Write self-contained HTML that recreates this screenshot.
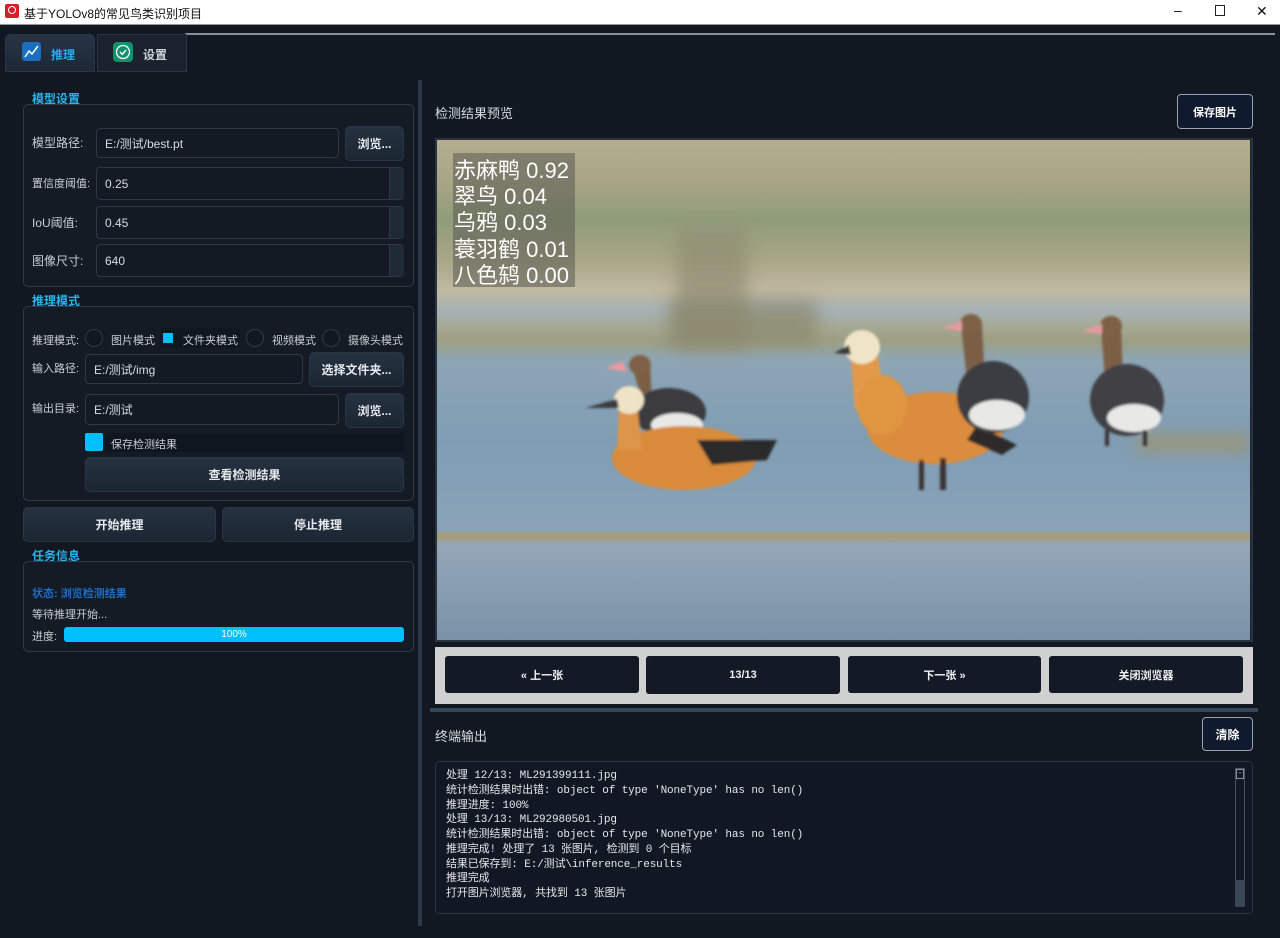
<!DOCTYPE html>
<html><head><meta charset="utf-8">
<style>
*{margin:0;padding:0;box-sizing:border-box}
body{width:1280px;height:938px;background:#121821;position:relative;overflow:hidden;font-family:"Liberation Sans","Noto Sans CJK SC",sans-serif;color:#d4d8de;font-size:12px}
.a{position:absolute}
.title{left:0;top:0;width:1280px;height:25px;background:#fff;color:#111;border-bottom:1px solid #999}
.sec{color:#27b4ee;font-weight:bold;font-size:12px}
.grp{border:1px solid #2f3947;border-radius:5px;background:#141b25}
.lbl{color:#c9cdd3;font-size:12px}
.inp{background:#131a24;border:1px solid #2f3846;border-radius:4px;color:#d8dce2;font-size:12px;padding-left:8px;display:flex;align-items:center}
.btn{background:linear-gradient(#263241,#1c2633);border:1px solid #2b3645;border-radius:5px;color:#e6e9ee;font-weight:bold;font-size:12px;display:flex;align-items:center;justify-content:center}
.spin{background:#202a37;border-left:1px solid #2f3846}
.nb{background:#131a26;border-radius:3px;color:#f0f0f0;font-weight:bold;font-size:11px;display:flex;align-items:center;justify-content:center}
.term{font-family:"Liberation Mono","Noto Sans CJK SC",monospace;font-size:11px;letter-spacing:-0.12px;line-height:14.75px;color:#e4e6ea;white-space:pre}
.rad{width:18px;height:18px;border:1px solid #2f3a48;border-radius:50%;background:#121821}
.r{font-size:11px}
</style></head><body>
<div class="a title">
 <div class="a" style="left:5px;top:4px;width:14px;height:14px;background:#d4202a;border-radius:2px"><div class="a" style="left:3px;top:2px;width:8px;height:8px;border:1.5px solid #fff;border-radius:50%"></div></div>
 <div class="a" style="left:24px;top:5px;font-size:12px">基于YOLOv8的常见鸟类识别项目</div>
 <div class="a" style="left:1174px;top:2px;font-size:14px">–</div>
 <div class="a" style="left:1215px;top:5px;width:10px;height:11px;border:1px solid #222"></div>
 <div class="a" style="left:1256px;top:3px;font-size:14px">✕</div>
</div>
<div class="a" style="left:185px;top:33px;width:1090px;height:2px;background:#8a9098"></div>
<div class="a" style="left:5px;top:34px;width:90px;height:38px;background:linear-gradient(#283446,#1d2735);border:1px solid #2b3544;border-radius:5px 5px 0 0"></div>
<div class="a" style="left:22px;top:42px;width:19px;height:19px;background:#1a6fc0;border-radius:3px"><svg width="19" height="19"><path d="M3 15 L7 9 L10 12 L16 4" stroke="#fff" stroke-width="1.5" fill="none"/></svg></div>
<div class="a" style="left:51px;top:46px;color:#1fb0ee;font-weight:bold">推理</div>
<div class="a" style="left:97px;top:34px;width:90px;height:38px;background:#1a222e;border:1px solid #2b3544"></div>
<div class="a" style="left:113px;top:42px;width:20px;height:20px;background:#14906c;border-radius:4px"><svg width="20" height="20"><circle cx="10" cy="10" r="6.5" stroke="#fff" stroke-width="1.3" fill="none"/><path d="M7 10 L9.3 12.3 L13 8" stroke="#fff" stroke-width="1.4" fill="none"/></svg></div>
<div class="a" style="left:143px;top:46px;color:#d0d4da;font-weight:bold">设置</div>
<div class="a" style="left:418px;top:80px;width:4px;height:846px;background:#2b3848"></div>

<div class="a sec" style="left:32px;top:90px">模型设置</div>
<div class="a grp" style="left:23px;top:104px;width:391px;height:183px"></div>
<div class="a lbl" style="left:32px;top:134px">模型路径:</div>
<div class="a inp" style="left:96px;top:128px;width:243px;height:30px">E:/测试/best.pt</div>
<div class="a btn" style="left:345px;top:126px;width:59px;height:35px">浏览...</div>
<div class="a lbl r" style="left:32px;top:175px">置信度阈值:</div>
<div class="a inp" style="left:96px;top:167px;width:308px;height:33px">0.25</div>
<div class="a spin" style="left:389px;top:168px;width:15px;height:31px"></div>
<div class="a lbl" style="left:32px;top:214px">IoU阈值:</div>
<div class="a inp" style="left:96px;top:206px;width:308px;height:33px">0.45</div>
<div class="a spin" style="left:389px;top:207px;width:15px;height:31px"></div>
<div class="a lbl" style="left:32px;top:252px">图像尺寸:</div>
<div class="a inp" style="left:96px;top:244px;width:308px;height:33px">640</div>
<div class="a spin" style="left:389px;top:245px;width:15px;height:31px"></div>

<div class="a sec" style="left:32px;top:292px">推理模式</div>
<div class="a grp" style="left:23px;top:306px;width:391px;height:195px"></div>
<div class="a lbl r" style="left:32px;top:332px">推理模式:</div>
<div class="a rad" style="left:85px;top:329px"></div><div class="a lbl r" style="left:111px;top:332px">图片模式</div>
<div class="a" style="left:160px;top:328px;width:80px;height:20px;background:#111720"></div>
<div class="a" style="left:163px;top:333px;width:10px;height:10px;background:#00bfff"></div><div class="a lbl r" style="left:183px;top:332px">文件夹模式</div>
<div class="a rad" style="left:246px;top:329px"></div><div class="a lbl r" style="left:272px;top:332px">视频模式</div>
<div class="a rad" style="left:322px;top:329px"></div><div class="a lbl r" style="left:348px;top:332px">摄像头模式</div>
<div class="a lbl r" style="left:32px;top:360px">输入路径:</div>
<div class="a inp" style="left:85px;top:354px;width:218px;height:30px">E:/测试/img</div>
<div class="a btn" style="left:309px;top:352px;width:95px;height:35px">选择文件夹...</div>
<div class="a lbl r" style="left:32px;top:400px">输出目录:</div>
<div class="a inp" style="left:85px;top:394px;width:254px;height:31px">E:/测试</div>
<div class="a btn" style="left:345px;top:393px;width:59px;height:35px">浏览...</div>
<div class="a" style="left:105px;top:433px;width:299px;height:19px;background:#10161f"></div>
<div class="a" style="left:85px;top:433px;width:18px;height:18px;background:#00bfff;border-radius:2px"></div>
<div class="a lbl" style="left:111px;top:436px;font-size:11px">保存检测结果</div>
<div class="a btn" style="left:85px;top:457px;width:319px;height:35px">查看检测结果</div>

<div class="a btn" style="left:23px;top:507px;width:193px;height:35px">开始推理</div>
<div class="a btn" style="left:222px;top:507px;width:192px;height:35px">停止推理</div>

<div class="a sec" style="left:32px;top:547px">任务信息</div>
<div class="a grp" style="left:23px;top:561px;width:391px;height:91px"></div>
<div class="a" style="left:32px;top:585px;color:#1b6fc8;font-weight:bold;font-size:11px">状态: 浏览检测结果</div>
<div class="a lbl" style="left:32px;top:606px;font-size:11px">等待推理开始...</div>
<div class="a lbl" style="left:32px;top:628px;font-size:11px">进度:</div>
<div class="a" style="left:64px;top:627px;width:340px;height:15px;background:#00bfff;border-radius:3px;color:#fff;font-size:10px;text-align:center;line-height:15px">100%</div>

<div class="a" style="left:435px;top:103px;font-size:13px;color:#d8dce2">检测结果预览</div>
<div class="a" style="left:1177px;top:94px;width:76px;height:35px;border:1px solid #9aa3ad;border-radius:4px;background:#0f1a2e;color:#fff;font-weight:bold;font-size:11px;display:flex;align-items:center;justify-content:center">保存图片</div>
<div class="a" style="left:435px;top:138px;width:818px;height:504px;border:2px solid #2a3441;background:#1b2330"></div>
<svg class="a" style="left:437px;top:140px" width="813" height="500" viewBox="0 0 813 500">
<defs>
<linearGradient id="bg" x1="0" y1="0" x2="0" y2="1">
<stop offset="0" stop-color="#b4ad8f"/><stop offset="0.08" stop-color="#a8a687"/>
<stop offset="0.16" stop-color="#8f9c7a"/><stop offset="0.24" stop-color="#a9a688"/>
<stop offset="0.30" stop-color="#c0b9a0"/><stop offset="0.34" stop-color="#a7b2b6"/>
<stop offset="0.38" stop-color="#a4a78e"/><stop offset="0.40" stop-color="#9d9f82"/>
<stop offset="0.44" stop-color="#8ea5b5"/><stop offset="0.6" stop-color="#7f9db4"/>
<stop offset="0.78" stop-color="#8aa3b8"/><stop offset="0.79" stop-color="#a79a72"/>
<stop offset="0.81" stop-color="#94a7b8"/><stop offset="1" stop-color="#7a92a8"/>
</linearGradient>
<filter id="bl"><feGaussianBlur stdDeviation="8"/></filter>
<filter id="b2"><feGaussianBlur stdDeviation="1.2"/></filter>
</defs>
<rect width="813" height="500" fill="url(#bg)"/>
<g filter="url(#bl)">
<rect x="240" y="90" width="70" height="120" fill="#8f8c70" opacity=".7"/>
<rect x="230" y="160" width="150" height="45" fill="#8a876c" opacity=".7"/>
<rect x="700" y="295" width="113" height="16" fill="#9d9472"/>
</g>
<g filter="url(#b2)">
<path d="M195 225 Q205 210 213 225 L215 260 L205 262 Z" fill="#7a5f45"/>
<path d="M168 228 L186 221 L190 232 Z" fill="#e89aa0"/>
<ellipse cx="203" cy="225" rx="11" ry="10" fill="#7d6247"/>
<ellipse cx="232" cy="272" rx="37" ry="24" fill="#3a3a40"/>
<ellipse cx="240" cy="285" rx="26" ry="12" fill="#e8e8e6"/>
<ellipse cx="247" cy="318" rx="72" ry="32" fill="#d98a3a"/>
<path d="M260 300 L340 300 L330 320 L275 325 Z" fill="#2b2a2a"/>
<path d="M182 265 L200 262 L205 310 L180 310 Z" fill="#dc9548"/>
<ellipse cx="192" cy="260" rx="15" ry="14" fill="#efe3c6"/>
<path d="M148 268 L180 259 L182 268 Z" fill="#3a3a3c"/>
<path d="M413 210 L440 210 L448 260 L418 270 Z" fill="#e29a48"/>
<ellipse cx="425" cy="207" rx="18" ry="17" fill="#f0e4c8"/>
<path d="M397 213 L412 205 L414 215 Z" fill="#3a3a3c"/>
<ellipse cx="498" cy="288" rx="68" ry="36" fill="#db8c3c"/>
<ellipse cx="445" cy="265" rx="25" ry="30" fill="#e0953f"/>
<path d="M540 285 L580 305 L565 315 L530 300 Z" fill="#2d2c2c"/>
<rect x="482" y="320" width="5" height="30" fill="#3b3232"/>
<rect x="503" y="318" width="6" height="32" fill="#3b3232"/>
<path d="M524 185 Q533 172 545 185 L548 240 L530 240 Z" fill="#7a5f45"/>
<ellipse cx="534" cy="184" rx="11" ry="10" fill="#7d6247"/>
<path d="M505 188 L525 181 L525 191 Z" fill="#e89aa0"/>
<ellipse cx="556" cy="257" rx="36" ry="36" fill="#3b3c42"/>
<ellipse cx="560" cy="275" rx="28" ry="15" fill="#e8e8e6"/>
<path d="M664 187 Q672 175 684 187 L686 240 L668 240 Z" fill="#7a5f45"/>
<ellipse cx="674" cy="186" rx="11" ry="10" fill="#7d6247"/>
<path d="M645 191 L665 184 L665 194 Z" fill="#e89aa0"/>
<ellipse cx="690" cy="260" rx="37" ry="36" fill="#404045"/>
<ellipse cx="697" cy="278" rx="27" ry="14" fill="#e8e8e6"/>
<rect x="668" y="290" width="4" height="16" fill="#3b3232"/><rect x="706" y="290" width="4" height="16" fill="#3b3232"/>
</g>
<rect x="16" y="13" width="122" height="134" fill="#5a5a52" opacity=".55"/>
<g font-family="Liberation Sans,Noto Sans CJK SC,sans-serif" font-size="22" fill="#ffffff">
<text x="17" y="38">赤麻鸭 0.92</text>
<text x="17" y="64">翠鸟 0.04</text>
<text x="17" y="90">乌鸦 0.03</text>
<text x="17" y="117">蓑羽鹤 0.01</text>
<text x="17" y="143">八色鸫 0.00</text>
</g>
</svg>
<div class="a" style="left:435px;top:647px;width:818px;height:57px;background:#cfd1d1"></div>
<div class="a nb" style="left:445px;top:656px;width:194px;height:37px">« 上一张</div>
<div class="a nb" style="left:646px;top:656px;width:194px;height:38px">13/13</div>
<div class="a nb" style="left:848px;top:656px;width:193px;height:37px">下一张 »</div>
<div class="a nb" style="left:1049px;top:656px;width:194px;height:37px">关闭浏览器</div>
<div class="a" style="left:430px;top:708px;width:828px;height:4px;background:#34475a"></div>
<div class="a" style="left:435px;top:726px;font-size:13px;color:#d8dce2">终端输出</div>
<div class="a" style="left:1202px;top:717px;width:51px;height:34px;border:1px solid #9aa3ad;border-radius:4px;background:#0f1a2e;color:#fff;font-weight:bold;font-size:12px;display:flex;align-items:center;justify-content:center">清除</div>
<div class="a" style="left:435px;top:761px;width:818px;height:153px;border:1px solid #2b3442;border-radius:4px;background:#111823"></div>
<div class="a term" style="left:446px;top:769px">处理 12/13: ML291399111.jpg
统计检测结果时出错: object of type 'NoneType' has no len()
推理进度: 100%
处理 13/13: ML292980501.jpg
统计检测结果时出错: object of type 'NoneType' has no len()
推理完成! 处理了 13 张图片, 检测到 0 个目标
结果已保存到: E:/测试\inference_results
推理完成
打开图片浏览器, 共找到 13 张图片</div>
<div class="a" style="left:1235px;top:768px;width:10px;height:139px;border:1px solid #4a5462;background:#111823"></div>
<div class="a" style="left:1235px;top:880px;width:10px;height:27px;background:#3a4656"></div>
<div class="a" style="left:1236px;top:769px;width:8px;height:10px;border:1px solid #8a929c;font-size:7px;color:#ccc;text-align:center;line-height:7px">-</div>
</body></html>
